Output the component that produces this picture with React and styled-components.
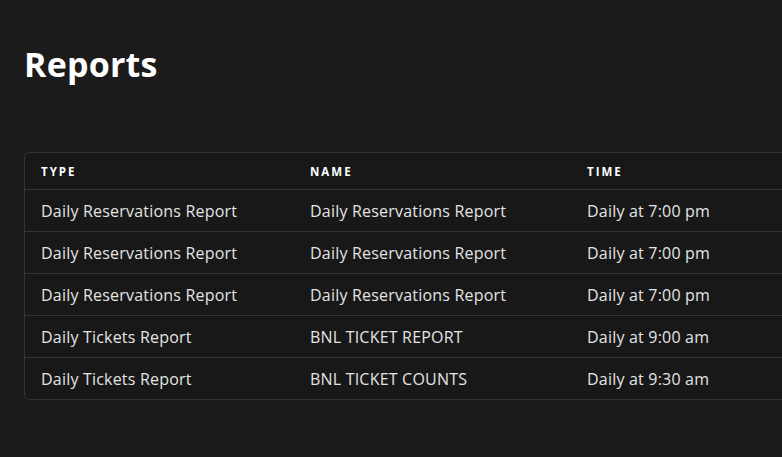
import React from "react";
import styled, { createGlobalStyle } from "styled-components";

const Global = createGlobalStyle`
  html, body { margin: 0; background: #1b1b1b; }
  body { font-family: "Open Sans", "Liberation Sans", sans-serif; color: #e8e8e8; overflow: hidden; }
`;
const Page = styled.div`
  padding: 40px 0 0 24px;
  width: 900px;
`;
const Title = styled.h1`
  margin: 0 0 64px;
  font-size: 34px;
  font-weight: 700;
  color: #fff;
  line-height: 48px;
  letter-spacing: 0.2px;
`;
const Table = styled.div`
  border: 1px solid #353535;
  border-radius: 6px;
  background: #181818;
  width: 860px;
`;
const Row = styled.div`
  display: grid;
  grid-template-columns: 269px 277px 1fr;
  padding-left: 16px;
  align-items: center;
  height: ${p => (p.head ? "36px" : "41px")};
  border-top: ${p => (p.head ? "none" : "1px solid #353535")};
  font-size: ${p => (p.head ? "11.5px" : "16px")};
  font-weight: ${p => (p.head ? 700 : 400)};
  letter-spacing: ${p => (p.head ? "2px" : "0.2px")};
  color: ${p => (p.head ? "#fff" : "#e4e4e4")};
`;
const rows = [
  ["Daily Reservations Report", "Daily Reservations Report", "Daily at 7:00 pm"],
  ["Daily Reservations Report", "Daily Reservations Report", "Daily at 7:00 pm"],
  ["Daily Reservations Report", "Daily Reservations Report", "Daily at 7:00 pm"],
  ["Daily Tickets Report", "BNL TICKET REPORT", "Daily at 9:00 am"],
  ["Daily Tickets Report", "BNL TICKET COUNTS", "Daily at 9:30 am"],
];
export default function App() {
  return (
    <Page>
      <Global />
      <Title>Reports</Title>
      <Table>
        <Row head><span>TYPE</span><span>NAME</span><span>TIME</span></Row>
        {rows.map((r, i) => (
          <Row key={i}>{r.map((c, j) => <span key={j}>{c}</span>)}</Row>
        ))}
      </Table>
    </Page>
  );
}
